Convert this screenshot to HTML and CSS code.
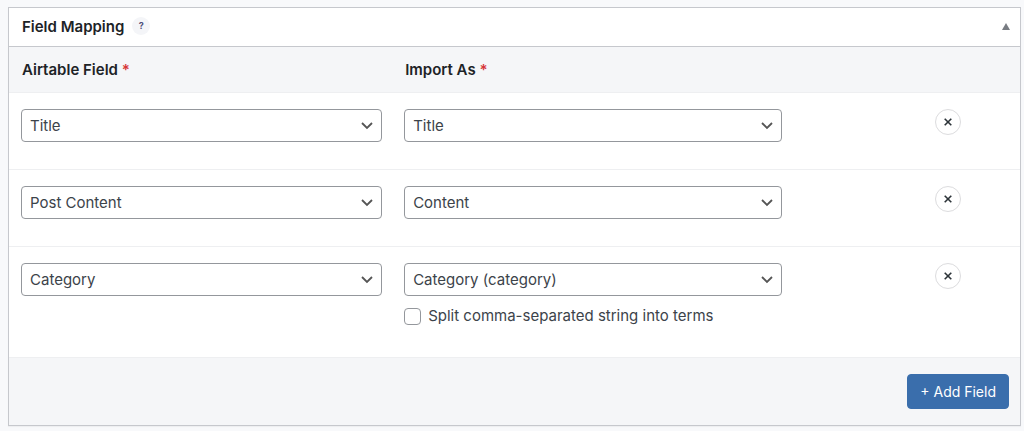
FILE: index.html
```
<!DOCTYPE html>
<html lang="en">
<head>
    <meta charset="UTF-8">
    <meta name="viewport" content="width=device-width, initial-scale=1.0">
    <title>Field Mapping</title>
    <link rel="stylesheet" href="styles.css">
</head>
<body>
    <section class="panel">
        <div class="panel-header">
            <h2>Field Mapping</h2>
            <button type="button" class="help" aria-label="Help">?</button>
            <button type="button" class="toggle" aria-label="Toggle panel">
                <svg width="8" height="7" viewBox="0 0 8 7"><path d="M4 0L8 7H0z" fill="#787c82"/></svg>
            </button>
        </div>

        <table class="mapping">
            <colgroup>
                <col class="col-field">
                <col class="col-import">
                <col>
            </colgroup>
            <thead>
                <tr>
                    <th scope="col">Airtable Field <span class="required">*</span></th>
                    <th scope="col">Import As <span class="required">*</span></th>
                    <td></td>
                </tr>
            </thead>
            <tbody>
                <tr>
                    <td><select aria-label="Airtable Field"><option>Title</option></select></td>
                    <td><select aria-label="Import As"><option>Title</option></select></td>
                    <td class="actions">
                        <button type="button" class="remove" aria-label="Remove field">
                            <svg width="8" height="8" viewBox="0 0 8 8"><path d="M.7.7l6.6 6.6M7.3.7L.7 7.3" stroke="#2c3338" stroke-width="1.6"/></svg>
                        </button>
                    </td>
                </tr>
                <tr>
                    <td><select aria-label="Airtable Field"><option>Post Content</option></select></td>
                    <td><select aria-label="Import As"><option>Content</option></select></td>
                    <td class="actions">
                        <button type="button" class="remove" aria-label="Remove field">
                            <svg width="8" height="8" viewBox="0 0 8 8"><path d="M.7.7l6.6 6.6M7.3.7L.7 7.3" stroke="#2c3338" stroke-width="1.6"/></svg>
                        </button>
                    </td>
                </tr>
                <tr>
                    <td><select aria-label="Airtable Field"><option>Category</option></select></td>
                    <td>
                        <select aria-label="Import As"><option>Category (category)</option></select>
                        <label class="option" for="split"><input type="checkbox" id="split">Split comma-separated string into terms</label>
                    </td>
                    <td class="actions">
                        <button type="button" class="remove" aria-label="Remove field">
                            <svg width="8" height="8" viewBox="0 0 8 8"><path d="M.7.7l6.6 6.6M7.3.7L.7 7.3" stroke="#2c3338" stroke-width="1.6"/></svg>
                        </button>
                    </td>
                </tr>
            </tbody>
        </table>

        <div class="panel-footer">
            <button type="button" class="btn">+ Add Field</button>
        </div>
    </section>
</body>
</html>
```
FILE: styles.css
```
* { margin: 0; padding: 0; box-sizing: border-box; }
body { font-family: Inter, sans-serif; font-size: 15px; line-height: 20px; background: #f8f9fb; color: #3c434a; padding: 7px 3px 5px 8px; }
button, select, input { font: inherit; color: inherit; }
svg { display: block; }

.panel { background: #fff; border: 1px solid #c6c8cd; box-shadow: 0 1px 1px rgba(0,0,0,0.04); }
.panel-header { display: flex; align-items: center; height: 39px; padding: 0 10px 0 13px; border-bottom: 1px solid #c6c8cd; }
.panel-header h2 { font-size: 15px; font-weight: 600; color: #1d2327; }
.help { width: 18px; height: 18px; margin: 0 auto 2px 8px; border: none; border-radius: 50%; background: #f4f5f8; color: #50507a; font-size: 9px; font-weight: 700; line-height: 18px; text-align: center; }
.toggle { padding-bottom: 2px; border: none; background: none; }

.mapping { width: 100%; table-layout: fixed; border-collapse: collapse; }
.col-field { width: 37.9%; }
.col-import { width: 39.5%; }
.mapping thead { background: #f5f6f8; }
.mapping th { padding: 13px 13px 12px; font-weight: 600; color: #1d2327; text-align: left; }
.mapping tr { border-bottom: 1px solid #eeeff1; }
.mapping tbody td { padding: 16px 10px 27px 12px; vertical-align: top; }
.mapping tbody .actions { padding-right: 59px; }
.required { color: #d63638; }

select { display: block; appearance: none; width: 100%; height: 33px; padding: 0 32px 0 8px; border: 1px solid #94979c; border-radius: 4px; background: #fff url("data:image/svg+xml,%3Csvg xmlns='http://www.w3.org/2000/svg' width='12' height='8'%3E%3Cpath d='M1 1l5 5 5-5' fill='none' stroke='%23555' stroke-width='1.8'/%3E%3C/svg%3E") no-repeat right 8px center; }

.option { display: flex; align-items: center; gap: 7px; margin: 10px 0 4px; }
.option input { appearance: none; width: 17px; height: 17px; border: 1px solid #94979c; border-radius: 4px; background: #fff; }

.remove { display: flex; align-items: center; justify-content: center; width: 26px; height: 26px; margin-left: auto; border: 1px solid #dcdcde; border-radius: 50%; background: #fff; }

.panel-footer { display: flex; justify-content: flex-end; padding: 16px 11px; background: #f5f6f8; }
.btn { height: 35px; padding: 0 12px; border: 1px solid #3a6eac; border-radius: 4px; background: #3a6eac; color: #fff; font-size: 14px; }
```
